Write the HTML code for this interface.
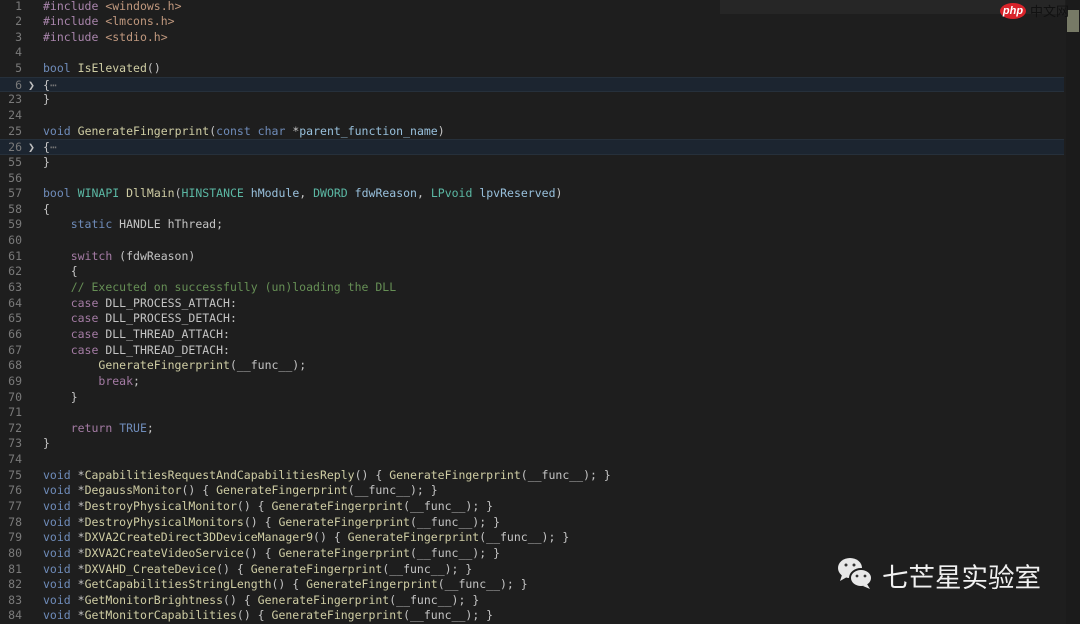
<!DOCTYPE html>
<html><head><meta charset="utf-8"><style>
body{margin:0;width:1080px;height:624px;background:#1e1e1e;overflow:hidden;position:relative;font-family:"DejaVu Sans Mono","Liberation Mono",monospace;font-size:11.5px;color:#c4c4c4}
.l{position:absolute;left:0;height:15.64px;line-height:15.64px;white-space:pre;width:1064px}
.n{position:absolute;left:0;width:22px;text-align:right;color:#7a7a7a}
.c{position:absolute;left:43px}
.hl{background:#1c2530;border-top:1px solid #26303b;border-bottom:1px solid #26303b;box-sizing:border-box}
.k{color:#6f8cba}.p{color:#a47ba4}.f{color:#cfcda4}.v{color:#98c0dc}.s{color:#c0987e}.g{color:#668f55}.t{color:#5bb8a4}.i{color:#a985ac}
.ar{position:absolute;left:28px;color:#c0c0c0}
</style></head><body>
<div style="position:absolute;left:720px;top:0;width:345px;height:14px;background:#262626"></div>
<div style="position:absolute;left:1066px;top:0;width:14px;height:624px;background:#1b1b1b"></div>
<div style="position:absolute;left:1067px;top:10px;width:12px;height:22px;background:#777a66"></div>
<div style="position:absolute;left:1000px;top:3px;width:26px;height:16px;border-radius:50%;background:#d8232a;color:#fff;font:italic bold 11px 'Liberation Sans',sans-serif;text-align:center;line-height:16px">php</div>
<div style="position:absolute;left:1030px;top:3px;color:#111;font:13px 'Noto Sans CJK SC',sans-serif;line-height:16px">中文网</div>
<div id="code"></div>
<div style="position:absolute;left:836px;top:556px;width:40px;height:36px">
<svg width="40" height="36" viewBox="0 0 40 36"><ellipse cx="14" cy="12" rx="12" ry="10" fill="#e8e8e8"/><path d="M6 19 L4 25 L11 21Z" fill="#e8e8e8"/><ellipse cx="25" cy="22" rx="11" ry="9" fill="#e8e8e8" stroke="#1e1e1e" stroke-width="2"/><path d="M31 28 L34 33 L27 30Z" fill="#e8e8e8"/><circle cx="10" cy="9" r="1.5" fill="#333"/><circle cx="18" cy="9" r="1.5" fill="#333"/><circle cx="21" cy="20" r="1.4" fill="#333"/><circle cx="29" cy="20" r="1.4" fill="#333"/></svg></div>
<div style="position:absolute;left:882px;top:556px;color:#f0f0f0;font:26.5px 'Noto Sans CJK SC',sans-serif;line-height:40px">七芒星实验室</div>
<script>
const L=[
[1,'<span class="i">#include</span> <span class="s">&lt;windows.h&gt;</span>'],
[2,'<span class="i">#include</span> <span class="s">&lt;lmcons.h&gt;</span>'],
[3,'<span class="i">#include</span> <span class="s">&lt;stdio.h&gt;</span>'],
[4,''],
[5,'<span class="k">bool</span> <span class="f">IsElevated</span>()'],
[6,'{<span style="color:#777">⋯</span>',1],
[23,'}'],
[24,''],
[25,'<span class="k">void</span> <span class="f">GenerateFingerprint</span>(<span class="k">const char</span> *<span class="v">parent_function_name</span>)'],
[26,'{<span style="color:#777">⋯</span>',1],
[55,'}'],
[56,''],
[57,'<span class="k">bool</span> <span class="t">WINAPI</span> <span class="f">DllMain</span>(<span class="t">HINSTANCE</span> <span class="v">hModule</span>, <span class="t">DWORD</span> <span class="v">fdwReason</span>, <span class="t">LPvoid</span> <span class="v">lpvReserved</span>)'],
[58,'{'],
[59,'    <span class="k">static</span> HANDLE hThread;'],
[60,''],
[61,'    <span class="p">switch</span> (fdwReason)'],
[62,'    {'],
[63,'    <span class="g">// Executed on successfully (un)loading the DLL</span>'],
[64,'    <span class="p">case</span> DLL_PROCESS_ATTACH:'],
[65,'    <span class="p">case</span> DLL_PROCESS_DETACH:'],
[66,'    <span class="p">case</span> DLL_THREAD_ATTACH:'],
[67,'    <span class="p">case</span> DLL_THREAD_DETACH:'],
[68,'        <span class="f">GenerateFingerprint</span>(__func__);'],
[69,'        <span class="p">break</span>;'],
[70,'    }'],
[71,''],
[72,'    <span class="p">return</span> <span class="k">TRUE</span>;'],
[73,'}'],
[74,''],
];
const fns=['CapabilitiesRequestAndCapabilitiesReply','DegaussMonitor','DestroyPhysicalMonitor','DestroyPhysicalMonitors','DXVA2CreateDirect3DDeviceManager9','DXVA2CreateVideoService','DXVAHD_CreateDevice','GetCapabilitiesStringLength','GetMonitorBrightness','GetMonitorCapabilities'];
fns.forEach((f,i)=>L.push([75+i,'<span class="k">void</span> *<span class="f">'+f+'</span>() { <span class="f">GenerateFingerprint</span>(__func__); }']));
let h='';
L.forEach((l,i)=>{const top=(-1.5+i*15.64).toFixed(2);
h+='<div class="l'+(l[2]?' hl':'')+'" style="top:'+top+'px"><span class="n">'+l[0]+'</span>'+(l[2]?'<span class="ar">❯</span>':'')+'<span class="c">'+l[1]+'</span></div>';});
document.getElementById('code').innerHTML=h;
</script>
</body></html>
